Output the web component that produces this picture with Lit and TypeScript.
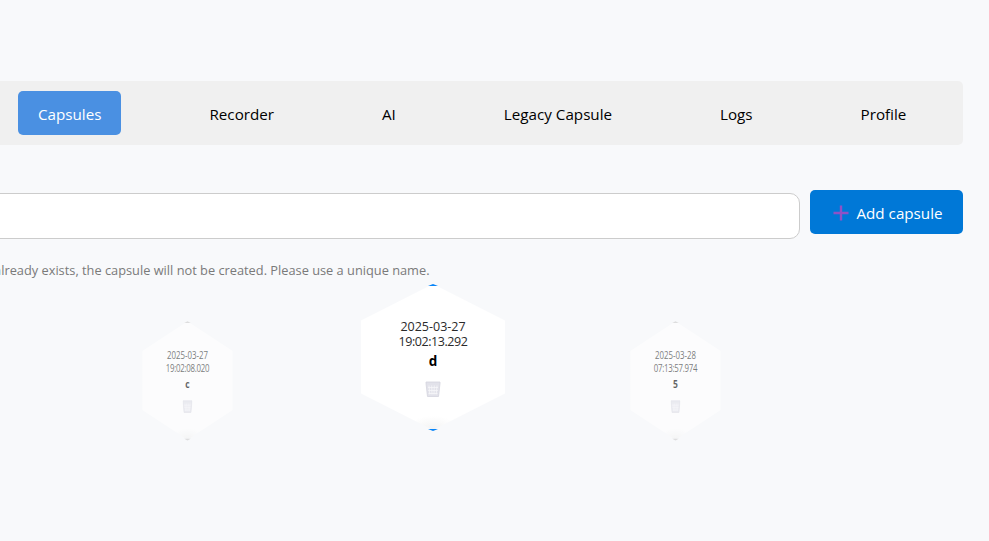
import { LitElement, html, css } from "lit";
import { customElement } from "lit/decorators.js";

const TABS = ["Capsules", "Recorder", "AI", "Legacy Capsule", "Logs", "Profile"];

const CAPSULES = [
  { date: "2025-03-27", time: "19:02:08.020", name: "c", side: "side" },
  { date: "2025-03-27", time: "19:02:13.292", name: "d", side: "" },
  { date: "2025-03-28", time: "07:13:57.974", name: "5", side: "side" },
];

@customElement("app-root")
export class AppRoot extends LitElement {
  static styles = css`
    :host {
      display: block;
      height: 541px;
      background: #f8f9fb;
      overflow: hidden;
      font-family: "Open Sans", "Noto Sans", sans-serif;
    }

    .page {
      width: 1263px;
      margin-left: -300px;
      padding-top: 81px;
      display: flex;
      flex-direction: column;
    }

    .tabs {
      height: 64px;
      box-sizing: border-box;
      padding: 10px 0 10px 318px;
      background: #f0f0f0;
      border-radius: 5px;
      display: flex;
      align-items: center;
      gap: 68px;
    }

    .tab {
      flex: none;
      height: 44px;
      box-sizing: border-box;
      padding: 1px 20px 0;
      border-radius: 5px;
      display: flex;
      align-items: center;
      font-size: 15.2px;
      color: #000;
      white-space: nowrap;
    }

    .tab.active {
      background: #4a90e2;
      color: #fff;
    }

    .form {
      margin-top: 45px;
      display: flex;
      gap: 10px;
      align-items: flex-start;
    }

    .name {
      flex: 1;
      height: 46px;
      box-sizing: border-box;
      margin-top: 3px;
      background: #fff;
      border: 1px solid #ccc;
      border-radius: 10px;
    }

    .add {
      flex: none;
      width: 153px;
      height: 44px;
      box-sizing: border-box;
      padding: 1px 0 0 3px;
      background: #0078d7;
      border-radius: 5px;
      color: #fff;
      display: flex;
      align-items: center;
      justify-content: center;
      gap: 7px;
      font-size: 15.2px;
      white-space: nowrap;
    }

    .add svg {
      flex: none;
      width: 16px;
      height: 16px;
    }

    .hint {
      margin-top: 22px;
      padding-left: 99px;
      font-size: 12.8px;
      line-height: 18px;
      color: #7a7a7a;
      white-space: nowrap;
    }

    .capsules {
      display: flex;
      justify-content: center;
      gap: 100px;
      margin-top: 5px;
      width: 900px;
      margin-left: 283px;
    }

    .hex {
      position: relative;
      flex: none;
      width: 144px;
      height: 146px;
    }

    .hex.side {
      transform: translate(-1.5px, 23.5px) scale(0.63, 0.81);
      opacity: 0.6;
    }

    .hex::before,
    .hex::after {
      content: "";
      position: absolute;
      z-index: 1;
      left: 50%;
      width: 0;
      height: 0;
      margin-left: -5px;
      border-left: 5px solid transparent;
      border-right: 5px solid transparent;
    }

    .hex::before {
      top: 0;
      border-bottom: 2px solid #0784f8;
    }

    .hex::after {
      bottom: -1px;
      border-top: 2px solid #0784f8;
    }

    .hex.side::before {
      border-bottom-color: #ccc;
    }

    .hex.side::after {
      border-top-color: #ccc;
    }

    .face {
      height: 100%;
      background: radial-gradient(ellipse 26px 14px at 50% 100%, #f2f2f2, #ffffff);
      clip-path: polygon(50% 0, 100% 25%, 100% 75%, 50% 100%, 0 75%, 0 25%);
      display: flex;
      flex-direction: column;
      align-items: center;
      padding-top: 35px;
      box-sizing: border-box;
      color: #2a2a2a;
      font-size: 12.5px;
      line-height: 15px;
      text-align: center;
    }

    .time {
      letter-spacing: -0.45px;
    }

    .label {
      margin-top: 4px;
      font-size: 13.5px;
      font-weight: 700;
      color: #000;
      line-height: 17px;
    }

    .face svg {
      margin-top: 11px;
      width: 16px;
      height: 16px;
    }
  `;

  render() {
    return html`
      <div class="page">
        <nav class="tabs">
          ${TABS.map(
            (t, i) => html`<div class="tab ${i === 0 ? "active" : ""}">${t}</div>`
          )}
        </nav>
        <div class="form">
          <div class="name"></div>
          <div class="add">
            <svg viewBox="0 0 16 16">
              <path d="M8 .5v15M.5 8h15" stroke="#8f52c6" stroke-width="2.4" fill="none" />
            </svg>
            Add capsule
          </div>
        </div>
        <div class="hint">
          If a capsule with the same name already exists, the capsule will not be created. Please use a unique name.
        </div>
        <div class="capsules">
          ${CAPSULES.map(
            (c) => html`
              <div class="hex ${c.side}">
                <div class="face">
                  <div>${c.date}</div>
                  <div class="time">${c.time}</div>
                  <div class="label">${c.name}</div>
                  <svg viewBox="0 0 16 16">
                    <path d="M1 1h14v1.5L13.5 15.5h-11L1 2.5z" fill="#e2e2ea" stroke="#d4d4de" stroke-width=".8" />
                    <path d="M4 4.5l.8 9M6.7 4.5l.3 9M9.3 4.5l-.3 9M12 4.5l-.8 9M3 6.5h10M3.2 9.5h9.6M3.5 12.5h9" stroke="#f6f6f9" stroke-width=".8" fill="none" />
                  </svg>
                </div>
              </div>
            `
          )}
        </div>
      </div>
    `;
  }
}
